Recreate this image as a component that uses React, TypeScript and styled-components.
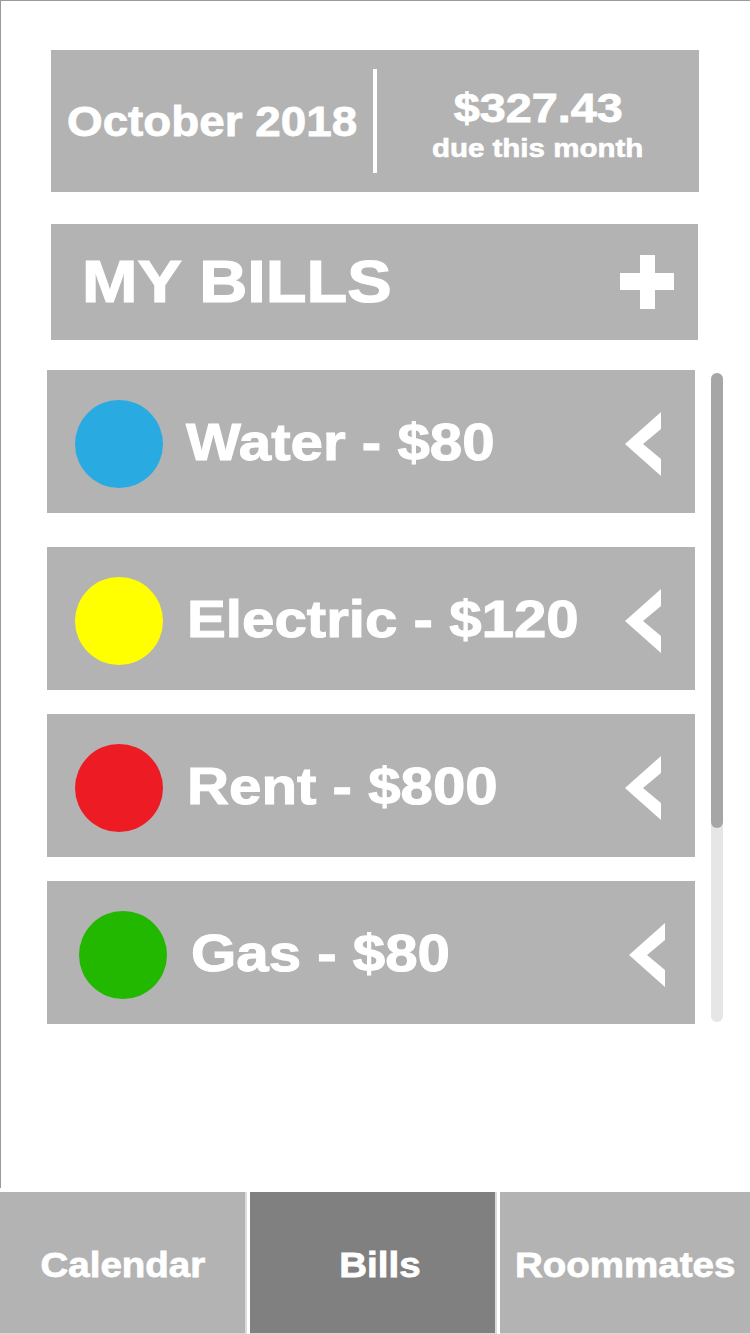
import React from "react";
import styled, { createGlobalStyle } from "styled-components";

const GlobalStyle = createGlobalStyle`
  html, body {
    margin: 0;
    padding: 0;
    background: #ffffff;
  }
  body {
    font-family: "Liberation Sans", Arial, Helvetica, sans-serif;
  }
  * { box-sizing: border-box; }
`;

const Screen = styled.div`
  width: 750px;
  height: 1334px;
  display: flex;
  flex-direction: column;
  background: #ffffff;
  overflow: hidden;
`;

const Main = styled.main`
  height: 1188px;
  border-top: 1px solid #9a9a9a;
  border-left: 1px solid #9a9a9a;
  display: flex;
  flex-direction: column;
`;

const Wide = styled.span<{ $sx?: number; $origin?: string; $stroke?: number }>`
  display: inline-block;
  white-space: nowrap;
  transform: scaleX(${(p) => p.$sx ?? 1.1});
  transform-origin: ${(p) => p.$origin ?? "center"};
  -webkit-text-stroke: ${(p) => p.$stroke ?? 0.8}px #ffffff;
`;

const Summary = styled.section`
  margin: 49px 0 0 50px;
  width: 648px;
  height: 142px;
  background: #b3b3b3;
  display: grid;
  grid-template-columns: 322px 4px 322px;
  color: #ffffff;
  font-weight: 700;
`;

const MonthCell = styled.div`
  display: flex;
  align-items: center;
  justify-content: center;
  padding-top: 2px;
  font-size: 42px;
  line-height: 42px;
`;

const Divider = styled.div`
  background: #ffffff;
  margin: 19px 0;
`;

const DueCell = styled.div`
  display: flex;
  flex-direction: column;
  align-items: center;
  justify-content: center;
  padding-top: 7px;
  gap: 8px;
`;

const Amount = styled.div`
  font-size: 40px;
  line-height: 40px;
`;

const DueLabel = styled.div`
  font-size: 25px;
  line-height: 25px;
`;

const BillsHeader = styled.section`
  margin: 32px 0 0 50px;
  width: 647px;
  height: 116px;
  background: #b3b3b3;
  display: flex;
  align-items: center;
  justify-content: space-between;
  padding: 0 24px 0 31px;
  color: #ffffff;
`;

const Title = styled.h1`
  margin: 0;
  font-size: 60px;
  line-height: 60px;
  font-weight: 700;
`;

const ListArea = styled.div`
  margin: 30px 0 0 46px;
  display: flex;
  gap: 16px;
`;

const List = styled.ul`
  list-style: none;
  margin: 0;
  padding: 0;
  width: 648px;
  display: flex;
  flex-direction: column;
`;

const Row = styled.li<{ $space: number; $shift: number }>`
  height: 143px;
  margin-top: ${(p) => p.$space}px;
  background: #b3b3b3;
  display: flex;
  align-items: center;
  padding: 0 ${(p) => 34 - p.$shift}px 0 ${(p) => 28 + p.$shift}px;
  color: #ffffff;
`;

const Dot = styled.span<{ $color: string }>`
  width: 88px;
  height: 88px;
  border-radius: 50%;
  background: ${(p) => p.$color};
  flex: none;
  margin-top: 5px;
`;

const BillName = styled.span<{ $gap: number }>`
  flex: 1;
  margin-left: ${(p) => p.$gap}px;
  font-size: 52px;
  line-height: 52px;
  font-weight: 700;
`;

const Chevron = styled.svg`
  width: 36px;
  height: 64px;
  flex: none;
  margin-top: 5px;
`;

const Track = styled.div`
  width: 12px;
  height: 649px;
  margin-top: 3px;
  border-radius: 6px;
  background: #e6e6e6;
  display: flex;
  flex-direction: column;
`;

const Thumb = styled.div`
  height: 455px;
  border-radius: 6px;
  background: #a6a6a6;
`;

const Nav = styled.nav`
  margin-top: 4px;
  height: 142px;
  display: grid;
  grid-template-columns: 245px 245px 1fr;
  gap: 5px;
`;

const Tab = styled.button<{ $active?: boolean; $nudge?: number }>`
  border: none;
  margin: 0;
  padding: 2px 0 0 ${(p) => p.$nudge ?? 0}px;
  background: ${(p) => (p.$active ? "#808080" : "#b3b3b3")};
  box-shadow: inset 0 -1px 0 #d8d8d8, 2px 0 0 #dcdcdc;
  color: #ffffff;
  font-family: "Liberation Sans", Arial, Helvetica, sans-serif;
  font-weight: 700;
  font-size: 35px;
  line-height: 35px;
  display: flex;
  align-items: center;
  justify-content: center;
`;

const bills = [
  { name: "Water - $80", color: "#29abe2", space: 0, shift: 0, gap: 23 },
  { name: "Electric - $120", color: "#ffff00", space: 34, shift: 0, gap: 24 },
  { name: "Rent - $800", color: "#ed1c24", space: 24, shift: 0, gap: 24 },
  { name: "Gas - $80", color: "#22b800", space: 24, shift: 4, gap: 24 },
];

const PlusIcon = () => (
  <svg width="54" height="54" viewBox="0 0 54 54" aria-hidden="true">
    <rect x="20" y="0" width="15" height="54" fill="#ffffff" />
    <rect x="0" y="18" width="54" height="17" fill="#ffffff" />
  </svg>
);

export default function App() {
  return (
    <>
      <GlobalStyle />
      <Screen>
        <Main>
          <Summary>
            <MonthCell>
              <Wide $sx={1.09}>October 2018</Wide>
            </MonthCell>
            <Divider />
            <DueCell>
              <Amount>
                <Wide $sx={1.17}>$327.43</Wide>
              </Amount>
              <DueLabel>
                <Wide $sx={1.18} $stroke={0.6}>due this month</Wide>
              </DueLabel>
            </DueCell>
          </Summary>

          <BillsHeader>
            <Title>
              <Wide $sx={1.11} $origin="left" $stroke={1.2}>MY BILLS</Wide>
            </Title>
            <PlusIcon />
          </BillsHeader>

          <ListArea>
            <List>
              {bills.map((b) => (
                <Row key={b.name} $space={b.space} $shift={b.shift}>
                  <Dot $color={b.color} />
                  <BillName $gap={b.gap}>
                    <Wide $sx={1.12} $origin="left" $stroke={1}>{b.name}</Wide>
                  </BillName>
                  <Chevron viewBox="0 0 36 64" aria-hidden="true">
                    <polygon points="36,0 0,32 36,64 36,47 18,32 36,17" fill="#ffffff" />
                  </Chevron>
                </Row>
              ))}
            </List>
            <Track>
              <Thumb />
            </Track>
          </ListArea>
        </Main>

        <Nav>
          <Tab>
            <Wide $sx={1.1}>Calendar</Wide>
          </Tab>
          <Tab $active $nudge={14}>
            <Wide $sx={1.1}>Bills</Wide>
          </Tab>
          <Tab>
            <Wide $sx={1.1}>Roommates</Wide>
          </Tab>
        </Nav>
      </Screen>
    </>
  );
}
